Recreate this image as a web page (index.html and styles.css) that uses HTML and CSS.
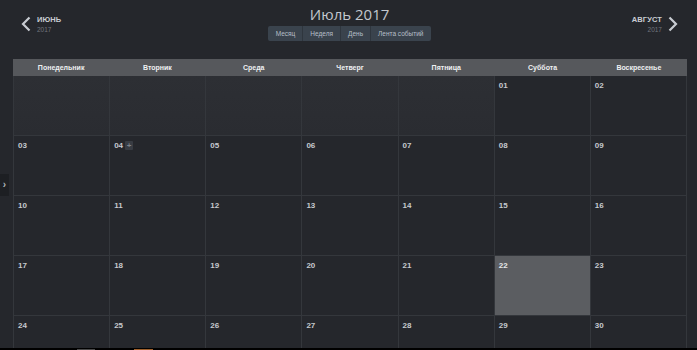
FILE: index.html
```html
<!DOCTYPE html>
<html lang="ru">
<head>
<meta charset="utf-8">
<link rel="stylesheet" href="styles.css">
</head>
<body>
<div class="page">
  <header class="top">
    <a class="nav nav-prev">
      <svg class="chev" width="10" height="16" viewBox="0 0 10 16"><path d="M8.5 1.5 L2 8 L8.5 14.5" fill="none" stroke="#c8ccd2" stroke-width="2.2"/></svg>
      <span class="nav-text"><span class="nav-month">ИЮНЬ</span><span class="nav-year">2017</span></span>
    </a>
    <div class="center">
      <h1 class="title">Июль 2017</h1>
      <div class="views">
        <span class="view">Месяц</span><span class="view">Неделя</span><span class="view">День</span><span class="view">Лента событий</span>
      </div>
    </div>
    <a class="nav nav-next">
      <span class="nav-text right"><span class="nav-month">АВГУСТ</span><span class="nav-year">2017</span></span>
      <svg class="chev" width="10" height="16" viewBox="0 0 10 16"><path d="M1.5 1.5 L8 8 L1.5 14.5" fill="none" stroke="#c8ccd2" stroke-width="2.2"/></svg>
    </a>
  </header>
  <div class="cal">
    <div class="head">
      <div>Понедельник</div><div>Вторник</div><div>Среда</div><div>Четверг</div><div>Пятница</div><div>Суббота</div><div>Воскресенье</div>
    </div>
    <div class="grid">
      <div class="cell other"></div><div class="cell other"></div><div class="cell other"></div><div class="cell other"></div><div class="cell other"></div>
      <div class="cell"><span class="num">01</span></div><div class="cell"><span class="num">02</span></div>
      <div class="cell"><span class="num">03</span></div>
      <div class="cell"><span class="num">04</span><span class="add">+</span></div>
      <div class="cell"><span class="num">05</span></div><div class="cell"><span class="num">06</span></div><div class="cell"><span class="num">07</span></div><div class="cell"><span class="num">08</span></div><div class="cell"><span class="num">09</span></div>
      <div class="cell"><span class="num">10</span></div><div class="cell"><span class="num">11</span></div><div class="cell"><span class="num">12</span></div><div class="cell"><span class="num">13</span></div><div class="cell"><span class="num">14</span></div><div class="cell"><span class="num">15</span></div><div class="cell"><span class="num">16</span></div>
      <div class="cell"><span class="num">17</span></div><div class="cell"><span class="num">18</span></div><div class="cell"><span class="num">19</span></div><div class="cell"><span class="num">20</span></div><div class="cell"><span class="num">21</span></div><div class="cell today"><span class="num">22</span></div><div class="cell"><span class="num">23</span></div>
      <div class="cell"><span class="num">24</span></div><div class="cell"><span class="num">25</span></div><div class="cell"><span class="num">26</span></div><div class="cell"><span class="num">27</span></div><div class="cell"><span class="num">28</span></div><div class="cell"><span class="num">29</span></div><div class="cell"><span class="num">30</span></div>
    </div>
  </div>
  <div class="side-tab">›</div>
</div>
<div class="taskbar"><span class="tb tb-gray"></span><span class="tb tb-orange"></span></div>
</body>
</html>
```
FILE: styles.css
```css
html, body { margin: 0; padding: 0; }
body {
  background: #25272c;
  font-family: "Liberation Sans", Arial, sans-serif;
  overflow: hidden;
  width: 697px;
  height: 350px;
}
.page {
  position: relative;
  height: 348px;
  overflow: hidden;
}
.top {
  height: 59px;
  display: flex;
  justify-content: space-between;
  align-items: flex-start;
  padding: 0 19px 0 21px;
  box-sizing: border-box;
}
.nav {
  display: flex;
  align-items: flex-start;
  gap: 6px;
  margin-top: 16px;
  cursor: pointer;
}
.chev { display: block; }
.nav-text { display: flex; flex-direction: column; }
.nav-text.right { align-items: flex-end; }
.nav-month {
  color: #c9cdd3;
  font-weight: bold;
  font-size: 7.5px;
  line-height: 7px;
  letter-spacing: 0.1px;
}
.nav-year {
  color: #71757c;
  font-size: 6.5px;
  line-height: 7px;
  margin-top: 3px;
}
.center {
  display: flex;
  flex-direction: column;
  align-items: center;
  margin-left: 6px;
}
.title {
  margin: 4px 0 0;
  font-family: "Open Sans", sans-serif;
  font-weight: normal;
  font-size: 15px;
  line-height: 21px;
  color: #c3c8cf;
}
.views {
  display: flex;
  margin-top: 1px;
  background: #3a434d;
  border-radius: 2px;
  height: 15px;
  overflow: hidden;
}
.view {
  font-family: "Liberation Sans", Arial, sans-serif;
  font-size: 6.5px;
  line-height: 15px;
  color: #b7bfc8;
  padding: 0 7px;
  border-left: 1px solid #2f363e;
}
.view:first-child { border-left: none; padding-left: 8px; }
.view:last-child { padding-right: 8px; }
.cal {
  margin: 0 10px 0 13px;
}
.head {
  display: grid;
  grid-template-columns: repeat(7, 1fr);
  height: 17px;
  background: #56585c;
}
.head div {
  text-align: center;
  color: #eef0f2;
  font-weight: bold;
  font-size: 7px;
  line-height: 17px;
}
.grid {
  display: grid;
  grid-template-columns: repeat(7, 1fr);
  grid-auto-rows: 60px;
  border-left: 1px solid #34373c;
}
.cell {
  border-right: 1px solid #34373c;
  border-bottom: 1px solid #34373c;
  padding: 5px 0 0 4px;
  box-sizing: border-box;
  display: flex;
  align-items: flex-start;
  gap: 2px;
}
.cell.other { background: linear-gradient(#2d2f34, #2a2c31); }
.cell.today { background: #5b5d61; }
.num {
  color: #c6cacf;
  font-weight: bold;
  font-size: 8px;
  line-height: 10px;
}
.today .num { color: #e6e8ea; }
.add {
  display: inline-block;
  width: 8px;
  height: 9px;
  background: #383c43;
  color: #7d838b;
  font-size: 8px;
  font-weight: bold;
  line-height: 9px;
  text-align: center;
  border-radius: 1px;
}
.side-tab {
  position: absolute;
  left: 0;
  top: 174px;
  width: 9px;
  height: 22px;
  background: #1d1f23;
  color: #b0b4ba;
  font-size: 10px;
  font-weight: bold;
  line-height: 21px;
  text-align: center;
}
.taskbar {
  height: 2px;
  background: #000;
  display: flex;
}
.tb { display: block; height: 1px; margin-top: 1px; }
.tb-gray { width: 18px; margin-left: 77px; background: #4a4a4a; }
.tb-orange { width: 19px; margin-left: 39px; background: #a0612c; }
```
